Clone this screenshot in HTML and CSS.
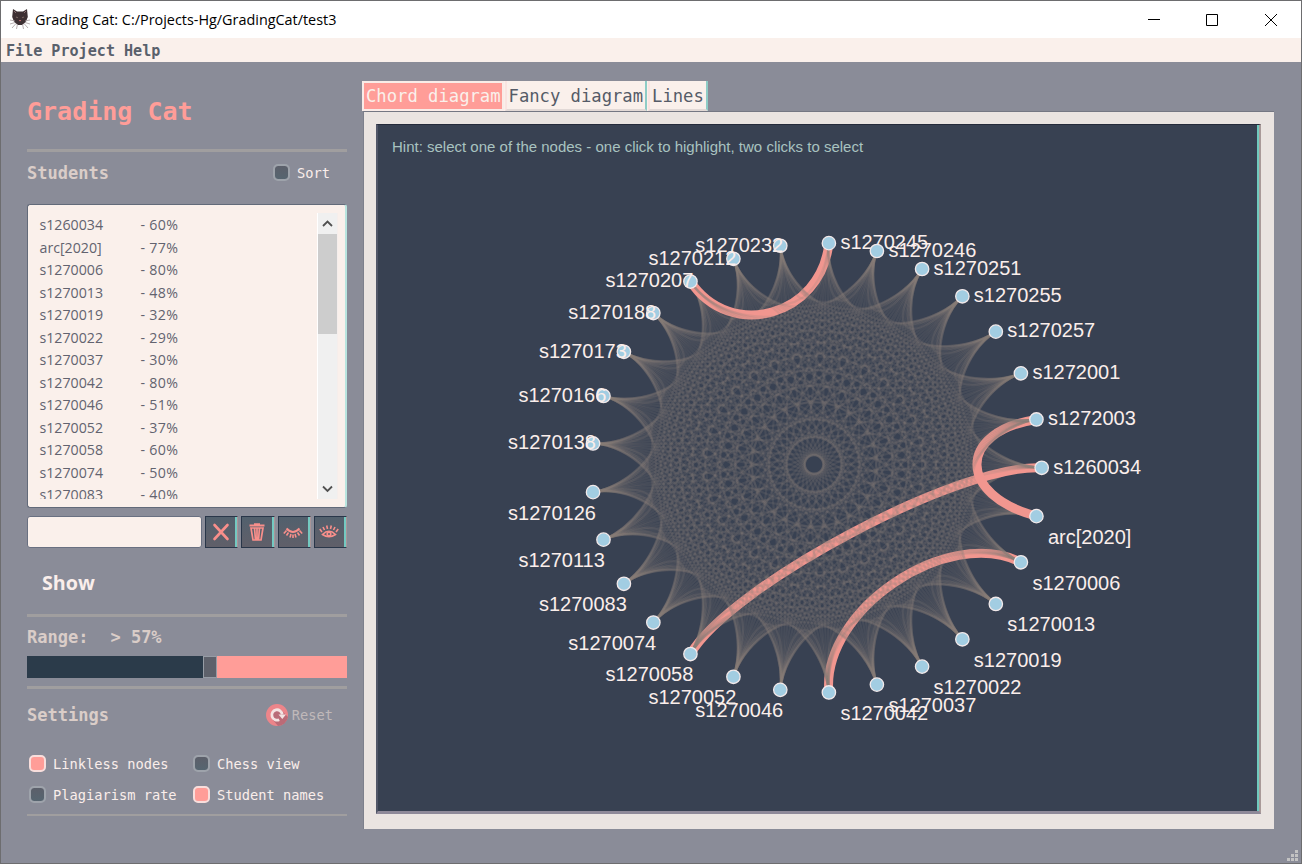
FILE: index.html
```html
<!DOCTYPE html>
<html lang="en">
<head>
<meta charset="utf-8">
<title>Grading Cat</title>
<link rel="stylesheet" href="styles.css">
</head>
<body>
<div class="window">
  <header class="titlebar">
    <svg class="cat" width="20" height="21" viewBox="0 0 20 21">
      <path d="M3 0 7 2.500h6L17 0l.8 8-1.800 4.500-3.500 3.500h-5L4 12.500 2.200 8z" fill="#3d3033"/>
      <path d="M4 2l2 2M16 2l-2 2" stroke="#8a6f72"/>
      <path d="M6 8l2 .8M14 8l-2 .8" stroke="#75635e" stroke-width="1.200"/>
      <path d="M8.800 11h2.400L10 12.500z" fill="#d8767a"/>
      <path d="M5 12 0 11M5 13.500 0 15M6 14.500 2 19M15 12l5-1M15 13.500l5 1.500M14 14.500l4 4.500M7.500 15l-1 5M12.500 15l1 5" stroke="#a79c9e" stroke-width=".8" fill="none"/>
    </svg>
    <span class="caption">Grading Cat: C:/Projects-Hg/GradingCat/test3</span>
    <svg class="controls" width="132" height="14" viewBox="0 0 132 14" fill="none" stroke="#000">
      <path d="M1 6.500h12M59.500 1.500h11v11h-11zM118 1l12 12M130 1l-12 12"/>
    </svg>
  </header>
  <nav class="menubar"><span>File</span><span>Project</span><span>Help</span></nav>
  <main class="body">
    <aside class="sidebar">
      <h1 class="title">Grading Cat</h1>
      <div class="rule"></div>
      <div class="head students"><h2>Students</h2><span class="check sort"><i class="box"></i>Sort</span></div>
      <div class="list">
        <div class="rows" id="rows"></div>
        <div class="scroll">
          <svg width="19" height="21" viewBox="0 0 19 21"><path d="M5 13 9.500 8.500l4.500 4.500" fill="none" stroke="#505050" stroke-width="1.800"/></svg>
          <div class="thumb"></div>
          <svg class="down" width="19" height="20" viewBox="0 0 19 20"><path d="M5 7.500 9.500 12 14 7.500" fill="none" stroke="#505050" stroke-width="1.800"/></svg>
        </div>
      </div>
      <div class="tools">
        <div class="field"></div>
        <div class="btn"><svg width="20" height="20" viewBox="0 0 20 20" fill="none" stroke="#f98f8b" stroke-width="2.600" stroke-linecap="round"><path d="M3.500 3 16.500 17M16.500 3 3.500 17"/></svg></div>
        <div class="btn"><svg width="20" height="20" viewBox="0 0 20 20" fill="none" stroke="#f98f8b" stroke-width="1.700"><path d="M2.500 3.500h15M7 2.300h6" stroke-width="2"/><path d="M4 6h12l-2 12H6zM7.500 6l1 12M10 6v12M12.500 6l-1 12"/></svg></div>
        <div class="btn"><svg width="20" height="20" viewBox="0 0 20 20" fill="none" stroke="#f98f8b" stroke-width="2"><path d="M3.500 6.500q6.500 7 13 0"/><path d="M3.500 8.500.8 11.500M5.500 10.500l-2 3M8 12l-1 3.500M10 12.500v3.500M12 12l1 3.500M14.500 10.500l2 3M16.500 8.500l2.700 3" stroke-width="1.600"/></svg></div>
        <div class="btn"><svg width="20" height="20" viewBox="0 0 20 20" fill="none" stroke="#f98f8b" stroke-width="1.600"><path d="M3.500 12.500q6.500-6.500 13 0-6.500 4.500-13 0z"/><circle cx="10" cy="12" r="1.800"/><path d="M3 10 .8 7M5.500 8 4 5M8.500 7l-.8-3.500M11.500 7l.8-3.500M14.500 8 16 5M17 10l2.200-3"/></svg></div>
      </div>
      <div class="show">Show</div>
      <div class="rule"></div>
      <div class="range">Range:<span class="value">&gt; 57%</span></div>
      <div class="slider"><div class="low"></div><div class="handle"></div></div>
      <div class="rule second"></div>
      <div class="head settings"><h2>Settings</h2>
        <span class="reset"><svg width="22" height="22" viewBox="0 0 22 22"><circle cx="11" cy="11" r="11" fill="#ec858a"/><path d="M15 6l7 7a11 11 0 0 1-10 9l-5-6z" fill="#bb6b77"/><circle cx="11" cy="11" r="5.200" fill="#b96c78"/><path d="M13.200 15.700A5.200 5.200 0 1 1 16.200 10.500" fill="none" stroke="#f3e3e2" stroke-width="2.800"/><path d="M12.500 10.500h7.500l-3.700 4.500z" fill="#f3e3e2"/></svg>Reset</span></div>
      <div class="checks">
        <span class="check"><i class="box on"></i>Linkless nodes</span><span class="check"><i class="box"></i>Chess view</span>
        <span class="check"><i class="box"></i>Plagiarism rate</span><span class="check"><i class="box on"></i>Student names</span>
      </div>
      <div class="rule thin"></div>
    </aside>
    <section class="content">
      <div class="tabs"><span class="tab active">Chord diagram</span><span class="tab">Fancy diagram</span><span class="tab">Lines</span></div>
      <div class="panel">
        <div class="canvas">
          <svg id="chord" width="880" height="685" viewBox="378 125 880 685"></svg>
        </div>
      </div>
    </section>
  </main>
  <svg class="grip" width="11" height="11" viewBox="0 0 11 11" fill="#c3c3c3"><path d="M8 0h3v3H8zM4 4h3v3H4zM8 4h3v3H8zM0 8h3v3H0zM4 8h3v3H4zM8 8h3v3H8z"/></svg>
</div>
<script src="chart.js"></script>
</body>
</html>
```

FILE: styles.css
```css
* { box-sizing: border-box; }
body { margin: 0; font-family: "Open Sans", "Noto Sans", sans-serif; }
.window { width: 1302px; height: 864px; border: 1px solid #6d6d6f; background: #8a8c98; display: flex; flex-direction: column; position: relative; overflow: hidden; }
.titlebar { height: 37px; flex: none; background: #fff; display: flex; align-items: center; padding: 0 22px 0 9px; }
.caption { margin-left: 5px; font-size: 14.400px; color: #000; flex: 1; white-space: nowrap; }
.menubar { height: 24px; flex: none; background: #faf0eb; display: flex; gap: 9px; padding: 1px 0 0 5px; align-items: center; font: bold 15.100px "DejaVu Sans Mono", monospace; color: #59606b; }
.body { flex: 1; display: flex; padding: 0 27px 0 26px; }
.sidebar { width: 320px; flex: none; display: flex; flex-direction: column; font-family: "DejaVu Sans Mono", monospace; }
.title { margin: 0; height: 87px; padding-top: 32px; font-size: 25px; line-height: 36px; color: #ff9d98; }
.rule { height: 3px; flex: none; background: #a09e9f; }
.head { display: flex; align-items: center; flex: none; }
.students { height: 41px; }
h2 { margin: 0; flex: 1; font-size: 17px; color: #dacdc8; }
.check { display: flex; align-items: center; gap: 7px; font-size: 13.700px; color: #faeeeb; white-space: nowrap; }
.sort { margin-right: 17px; }
.box { width: 17px; height: 17px; border-radius: 5px; border: 2px solid #9ea3ab; background: linear-gradient(#5c5f6a, #566570) padding-box; }
.box.on { background: #ff9d98; border-color: #f8dedc; }
.list { height: 304px; margin-top: 11px; flex: none; border: 1px solid #626a79; border-right: 2px solid #b9e5df; border-radius: 3px; background: #faf0eb; display: flex; padding: 8px 7px 8px 0; }
.rows { flex: 1; overflow: hidden; padding: 1px 0 0 11.500px; font: 14.200px/22.500px "Open Sans", "Noto Sans", sans-serif; color: #62636f; }
.row { display: grid; grid-template-columns: 101px 1fr; height: 22.500px; }
.row span + span { letter-spacing: .3px; }
.scroll { width: 21px; background: #f0f0f0; border-left: 1px solid #fff; border-right: 1px solid #f5eeec; display: flex; flex-direction: column; }
.thumb { height: 100px; background: #cdcdcd; }
.down { margin-top: auto; }
.tools { display: flex; height: 32px; margin-top: 8px; gap: 3px; flex: none; }
.field { width: 175px; border: 1px solid #697081; border-radius: 3px; background: #faf0eb; }
.btn { flex: 1; display: flex; align-items: center; justify-content: center; padding-right: 2px; background: linear-gradient(#52606d, #605f69); border: 1px solid #293649; border-right: 1px solid #a99598; box-shadow: inset -2px 0 #74c9c1; }
.show { height: 66px; flex: none; padding: 0 0 0 15px; font: bold 19.700px/69px "Open Sans", sans-serif; color: #faeeeb; }
.range { height: 39px; flex: none; font-size: 17px; line-height: 41px; font-weight: bold; color: #dacdc8; }
.value { margin-left: 22px; }
.slider { height: 22px; flex: none; background: #ff9d98; display: flex; }
.low { width: 176px; background: #2b3b4a; }
.handle { width: 14px; background: #5e616b; border: 1px solid #969ca5; }
.second { margin-top: 8px; }
.settings { height: 51px; }
.reset { display: flex; align-items: center; gap: 4px; color: #c0b9ba; font-size: 13.700px; margin-right: 14px; }
.checks { display: grid; grid-template-columns: 164px 1fr; grid-template-rows: 31px 31px; padding: 8px 0 4px 2px; flex: none; }
.thin { height: 2px; }
.content { flex: 1; margin-left: 15px; padding-top: 19px; }
.tabs { display: flex; height: 30px; width: 346px; color: #555b67; font: 17.200px "DejaVu Sans Mono", monospace; background: #faf0eb; }
.tab { padding: 0 2px; line-height: 30px; border-right: 2px solid #8eccc6; border-bottom: 2px solid #e2d9d6; border-left: 2px solid #f9e4e1; white-space: nowrap; }
.tab + .tab { margin-left: 1px; }
.tab.active { background: #ff9d98; color: #faf0eb; border: 2px solid #f9ece8; padding: 0 1px 0 2px; line-height: 27px; }
.panel { width: 911px; height: 718px; margin-left: 1px; border-top: 1px solid #747783; border-left: 1px solid #7d808c; background: #eae4e1; padding: 12px 13px 15px 12px; }
.canvas { height: 690px; background: #384152; border-top: 1px solid #252b3b; border-left: 2px solid #515668; border-bottom: 3px solid #8e8999; border-right: 2px solid #a99a99; box-shadow: inset -2px 0 #70c9be; overflow: hidden; }
.canvas svg { display: block; }
.mesh { fill: none; stroke: #8a7f7c; stroke-width: 2.200; opacity: .18; }
.match { fill: none; stroke: #f1968f; stroke-width: 9; }
.node { fill: #a2cde2; stroke: #f2e9ea; stroke-width: 1.300; }
.name { font: 20px "Liberation Sans", Arial, sans-serif; fill: #faeeeb; }
.hint { font: 15px "Liberation Sans", Arial, sans-serif; fill: #a8c3c0; }
.grip { position: absolute; right: 3px; bottom: 2px; }
```

FILE: chart.js
```js
const list = [["s1260034",60],["arc[2020]",77],["s1270006",80],["s1270013",48],["s1270019",32],["s1270022",29],["s1270037",30],["s1270042",80],["s1270046",51],["s1270052",37],["s1270058",60],["s1270074",50],["s1270083",40]];
document.getElementById("rows").innerHTML = list.map(r => `<div class="row"><span>${r[0]}</span><span>- ${r[1]}%</span></div>`).join("");

const names = list.map(r => r[0]).concat("113 126 138 166 173 188 207 212 232 245 246 251 255 257".split(" ").map(n => "s1270" + n), "s1272001", "s1272003");
const cx = 816.7, cy = 467.8, radius = 225, pull = .345;
const points = names.map((name, i) => {
  const a = i * 2 * Math.PI / names.length;
  return [cx + radius * Math.cos(a), cy + radius * Math.sin(a)];
});
// Bezier handle of a node, drawn towards the centre of the ring
const handle = ([x, y]) => `${x + pull * (cx - x) - 3.5} ${y + pull * (cy - y) - 4.5}`;
const matches = new Set(["0-10", "1-28", "2-7", "19-22"]);
let out = '<text class="hint" x="392" y="152">Hint: select one of the nodes - one click to highlight, two clicks to select</text>';
for (let i = 0; i < points.length; i++) {
  for (let j = i + 1; j < points.length; j++) {
    const p = points[i], q = points[j];
    const kind = matches.has(i + "-" + j) ? "match" : "mesh";
    out += `<path class="${kind}" d="M${p.join(" ")}C${handle(p)} ${handle(q)} ${q.join(" ")}"/>`;
  }
}
points.forEach(([x, y], i) => {
  const tx = x >= cx ? x + 11.5 : x - 85;
  const ty = i > 0 && y > cy ? y + 27.4 : y + 5.8;
  out += `<circle class="node" cx="${x}" cy="${y}" r="6.7"/><text class="name" x="${tx}" y="${ty}">${names[i]}</text>`;
});
document.getElementById("chord").innerHTML = out;
```
